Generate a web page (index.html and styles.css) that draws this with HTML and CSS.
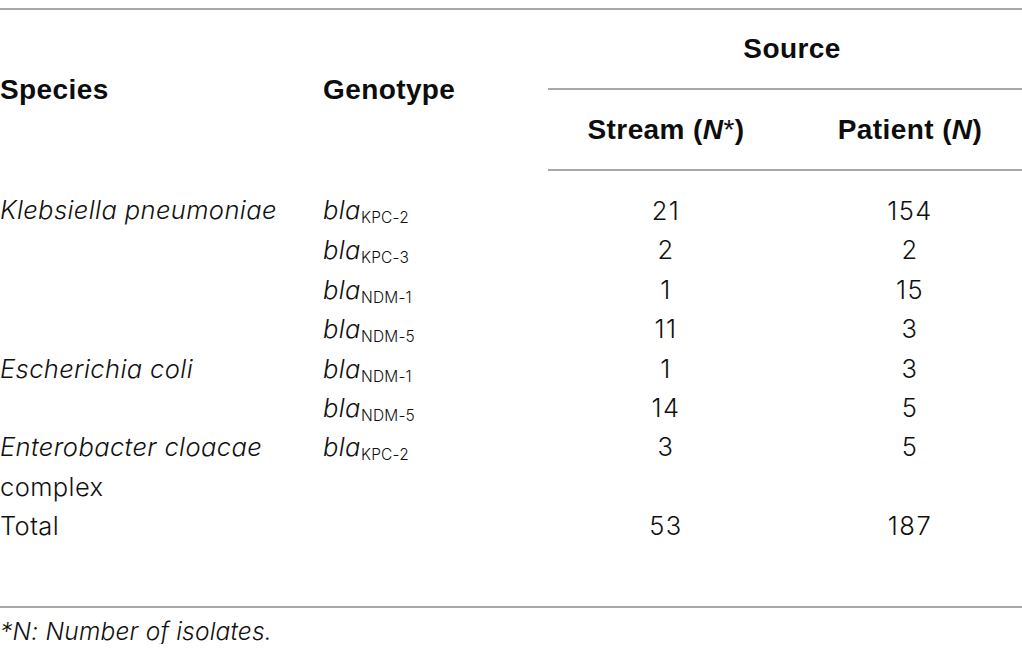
FILE: index.html
```html
<!DOCTYPE html>
<html lang="en">
<head>
<meta charset="utf-8">
<title>Carbapenemase genotypes by source</title>
<link rel="stylesheet" href="styles.css">
</head>
<body>
<div class="page">
  <table class="data">
    <colgroup>
      <col class="c-species">
      <col class="c-geno">
      <col class="c-stream">
      <col class="c-patient">
    </colgroup>
    <thead>
      <tr class="h1">
        <th rowspan="2" class="left">Species</th>
        <th rowspan="2" class="left">Genotype</th>
        <th colspan="2" class="source">Source</th>
      </tr>
      <tr class="h2">
        <th class="num">Stream (<i>N</i><span class="ast">*</span>)</th>
        <th class="num pat">Patient (<i>N</i>)</th>
      </tr>
    </thead>
    <tbody>
      <tr class="first">
        <td><i>Klebsiella pneumoniae</i></td>
        <td><i>bla</i><sub>KPC-2</sub></td>
        <td class="num">21</td>
        <td class="num pat">154</td>
      </tr>
      <tr>
        <td></td>
        <td><i>bla</i><sub>KPC-3</sub></td>
        <td class="num">2</td>
        <td class="num pat">2</td>
      </tr>
      <tr>
        <td></td>
        <td><i>bla</i><sub>NDM-1</sub></td>
        <td class="num">1</td>
        <td class="num pat">15</td>
      </tr>
      <tr>
        <td></td>
        <td><i>bla</i><sub>NDM-5</sub></td>
        <td class="num">11</td>
        <td class="num pat">3</td>
      </tr>
      <tr>
        <td><i>Escherichia coli</i></td>
        <td><i>bla</i><sub>NDM-1</sub></td>
        <td class="num">1</td>
        <td class="num pat">3</td>
      </tr>
      <tr>
        <td></td>
        <td><i>bla</i><sub>NDM-5</sub></td>
        <td class="num">14</td>
        <td class="num pat">5</td>
      </tr>
      <tr>
        <td><i>Enterobacter cloacae</i> complex</td>
        <td><i>bla</i><sub>KPC-2</sub></td>
        <td class="num">3</td>
        <td class="num pat">5</td>
      </tr>
      <tr class="last">
        <td>Total</td>
        <td></td>
        <td class="num">53</td>
        <td class="num pat">187</td>
      </tr>
    </tbody>
  </table>
  <p class="note"><i>*N: Number of isolates.</i></p>
</div>
</body>
</html>
```

FILE: styles.css
```css
html, body {
  margin: 0;
  padding: 0;
  background: #ffffff;
}

body {
  font-family: "Inter", "Liberation Sans", sans-serif;
  font-weight: 270;
  color: #111111;
}

.page {
  padding-top: 8px;
  width: 1022px;
}

.data {
  width: 1022px;
  border-collapse: collapse;
  table-layout: fixed;
  border-top: 2px solid #a8a8a8;
  border-bottom: 2px solid #a8a8a8;
}

.c-species { width: 323px; }
.c-geno { width: 225px; }
.c-stream { width: 236px; }
.c-patient { width: 238px; }

th {
  font-family: "Liberation Sans", "Inter", sans-serif;
  font-weight: 700;
  font-size: 28px;
  letter-spacing: 0.4px;
  padding: 0;
  color: #0d0d0d;
}

th .ast {
  font-weight: 400;
}

th.left {
  text-align: left;
  vertical-align: middle;
}

.h1 th {
  height: 78px;
}

.h2 th {
  height: 79px;
  border-bottom: 2px solid #a8a8a8;
}

th.source {
  text-align: center;
  border-bottom: 2px solid #a8a8a8;
  padding-left: 14px;
}

td {
  font-size: 25.5px;
  letter-spacing: 0.4px;
  line-height: 39.4px;
  padding: 0;
  vertical-align: top;
  text-align: left;
}

td.num {
  letter-spacing: 1.5px;
}

.num {
  text-align: center;
}

.pat {
  padding-left: 14px;
}

tr.first td {
  padding-top: 20px;
}

tr.last td {
  padding-bottom: 60px;
}

sub {
  font-size: 15.5px;
  letter-spacing: 0.2px;
  line-height: 0;
  vertical-align: -4px;
}

.note {
  margin: 0;
  padding-top: 10px;
  font-size: 24.5px;
  letter-spacing: 0.2px;
  line-height: 26px;
}
```
